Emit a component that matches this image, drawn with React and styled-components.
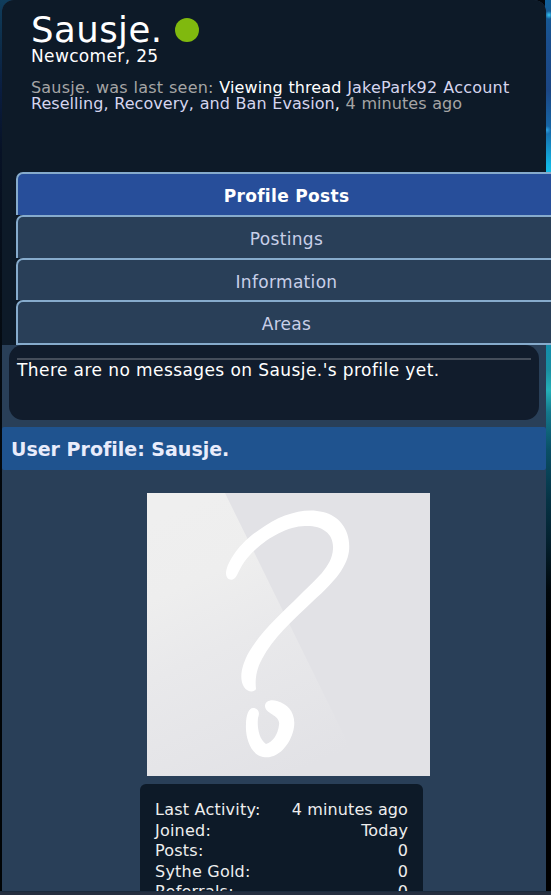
import styled, { createGlobalStyle } from "styled-components"

const GlobalStyle = createGlobalStyle`
  * {
    box-sizing: border-box;
  }

  html, body {
    margin: 0;
    padding: 0;
    overflow: hidden;
  }

  body {
    font-family: Verdana, "DejaVu Sans", sans-serif;
    font-size: 16px;
    font-variant-ligatures: none;
    color: #fff;
    background: #02060c;
  }
`

const Page = styled.div`
  height: 895px;
  display: flex;
  flex-direction: column;
  overflow: hidden;
  background:
    radial-gradient(circle at 549px 15px, #35c4f2 0, transparent 4px),
    radial-gradient(circle at 547px 130px, #2ba0e0 0, transparent 4px),
    linear-gradient(#12609a 0, #1a4f8e 40px, #1b4684 90px, #1668a8 130px, #12b4e4 165px, #15c0e8 176px, #128eac 345px, #1a8fa2 370px, #24b0b8 390px, #14788c 412px, #0a4f66 450px, #063345 500px, #042230 540px, #01080c 590px, #000 640px) right / 6px 100% no-repeat,
    linear-gradient(#103d5c 0, #0d2f4c 40px, #0a1d40 90px, #071226 150px, #050c14 300px, #010406 600px) left / 14px 100% no-repeat,
    #02060c;
`

const Content = styled.main`
  width: 544px;
  height: 891px;
  margin-left: 2px;
  flex: none;
  background: #293f58;
  border-radius: 12px 12px 0 0;
  /* the tab strip runs past the right edge of the content */
  overflow-x: visible;
  overflow-y: clip;
`

const Header = styled.header`
  height: 344.5px;
  padding: 11px 30px 0 29px;
  background: #0d1a28;
  border-radius: 12px 12px 0 0;
`

const NameRow = styled.div`
  display: flex;
  align-items: center;
  gap: 12.5px;
  height: 37px;
`

const Username = styled.h1`
  margin: 0;
  font-size: 35.5px;
  line-height: 37px;
  font-weight: 400;
  letter-spacing: 0.45px;
`

const OnlineDot = styled.span`
  width: 24px;
  height: 24px;
  border-radius: 50%;
  background: #80b90e;
`

const Blurb = styled.p`
  margin: 0;
  font-size: 17px;
  line-height: 17px;
  letter-spacing: 0.35px;
`

const LastSeen = styled.p`
  margin: 15px 0 0;
  line-height: 16px;
  letter-spacing: 0.1px;
  word-spacing: 0.5px;
  white-space: nowrap;
  color: #fff;
`

const Muted = styled.span`
  color: #a5a5a5;
  letter-spacing: ${(props) => props.$spacing || "0.05px"};
`

const ThreadLink = styled.a`
  color: #d5d5ee;
  letter-spacing: ${(props) => props.$spacing || "0.05px"};
`

const Tabs = styled.ul`
  list-style: none;
  width: 541px;
  margin: 60px 0 0 -15px;
  padding: 0;
`

const Tab = styled.li`
  height: ${(props) => (props.$last ? "44.3px" : "42.8px")};
  border: 2px solid #86abcc;
  border-bottom-width: ${(props) => (props.$last ? "2px" : "0")};
  border-radius: 7px 7px 0 0;
  background: ${(props) => (props.$active ? "#274e9a" : "#293f58")};
  color: ${(props) => (props.$active ? "#fff" : "#c8cfe8")};
  font-size: 17px;
  font-weight: ${(props) => (props.$active ? 700 : 400)};
  line-height: 44px;
  letter-spacing: 0.32px;
  text-align: center;
`

const Messages = styled.section`
  height: 75px;
  margin: 0 7px;
  padding: 13px 8px 0;
  border-radius: 14px;
  background: #111c2c;
`

const MessageText = styled.p`
  margin: 0;
  border-top: 2px solid #454d5a;
  line-height: 20px;
  white-space: nowrap;
  font-size: 17px;
  letter-spacing: 0.42px;
`

const ProfileHeading = styled.h2`
  height: 42.5px;
  margin: 7.5px 0 0;
  padding-left: 9px;
  border-radius: 2px;
  background: #1f538f;
  color: #e9ecfb;
  font-size: 19px;
  line-height: 45px;
`

const Avatar = styled.svg`
  display: block;
  width: 283px;
  height: 283px;
  margin: 23.5px 0 0 145px;
`

const Stats = styled.dl`
  width: 283px;
  height: 140px;
  margin: 8px 0 0 138px;
  padding: 15px 15px 0;
  border-radius: 6px;
  background: #0d1a28;
`

const StatRow = styled.div`
  display: flex;
  justify-content: space-between;
  height: 20.5px;
  line-height: 21px;
  letter-spacing: 0.22px;
  color: #eee;

  dd {
    margin: 0;
    letter-spacing: 0.1px;
  }
`

const BottomBar = styled.footer`
  height: 4px;
  flex: none;
  border-top: 1px solid #1b2b3d;
  background: #252f40;
`

const tabs = ["Profile Posts", "Postings", "Information", "Areas"]

const stats = [
  ["Last Activity:", "4 minutes ago"],
  ["Joined:", "Today"],
  ["Posts:", "0"],
  ["Sythe Gold:", "0"],
  ["Referrals:", "0"],
]

const DefaultAvatar = () => (
  <Avatar viewBox="0 0 283 283">
    <defs>
      <linearGradient id="shine" x1="0.3" y1="0" x2="0.65" y2="1">
        <stop offset="0" stopColor="#efefef" />
        <stop offset="0.25" stopColor="#eeeeee" />
        <stop offset="0.5" stopColor="#e9e9eb" />
        <stop offset="1" stopColor="#e2e2e6" />
      </linearGradient>
    </defs>
    <rect width="283" height="283" fill="#e2e2e6" />
    <path d="M0 0H78L217 283H0Z" fill="url(#shine)" />
    <path
      d="M79 80C80 67 96 47 112 37C133 21 158 14 176 19C193 23 204 38 202 58C200 76 183 93 164 110C146 127 126 145 115 166C109 177 108 187 109 196C107 200 100 199 97 194C91 184 96 170 102 159C115 137 135 120 153 102C168 87 185 74 186 56C187 41 176 33 160 33C143 32 122 44 109 56C98 66 95 72 90 82C87 89 79 88 79 80Z"
      fill="#fff"
    />
    <path
      d="M118 213C118 208 124 206 130 208C141 211 149 220 147 234C145 249 132 267 116 264C104 262 98 245 99 231C99 222 102 214 107 215C112 216 113 220 111 225C110 235 112 246 119 251C126 249 131 241 132 232C134 222 118 221 118 213Z"
      fill="#fff"
    />
  </Avatar>
)

const App = () => {
  return (
    <>
      <GlobalStyle />
      <Page>
        <Content>
          <Header>
            <NameRow>
              <Username>Sausje.</Username>
              <OnlineDot />
            </NameRow>
            <Blurb>Newcomer, 25</Blurb>
            <LastSeen>
              <Muted $spacing="0.2px">Sausje. was last seen:</Muted> Viewing thread{" "}
              <ThreadLink $spacing="0.23px">JakePark92 Account</ThreadLink>
              <br />
              <ThreadLink>Reselling, Recovery, and Ban Evasion</ThreadLink>
              , <Muted>4 minutes ago</Muted>
            </LastSeen>
            <Tabs>
              {tabs.map((label, i) => (
                <Tab key={label} $active={i === 0} $last={i === tabs.length - 1}>
                  {label}
                </Tab>
              ))}
            </Tabs>
          </Header>

          <Messages>
            <MessageText>There are no messages on Sausje.'s profile yet.</MessageText>
          </Messages>

          <ProfileHeading>User Profile: Sausje.</ProfileHeading>
          <DefaultAvatar />

          <Stats>
            {stats.map(([label, value]) => (
              <StatRow key={label}>
                <dt>{label}</dt>
                <dd>{value}</dd>
              </StatRow>
            ))}
          </Stats>
        </Content>
        <BottomBar />
      </Page>
    </>
  )
}

export default App
